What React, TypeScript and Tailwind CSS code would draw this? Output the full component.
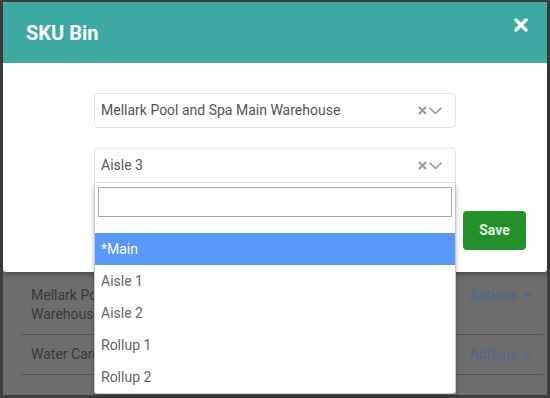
import { useState } from 'react'

const BINS = ['*Main', 'Aisle 1', 'Aisle 2', 'Rollup 1', 'Rollup 2']

const ROWS = [
  { name: 'Mellark Pool and Spa Main Warehouse', bin: 'Aisle 3' },
  { name: 'Water Care Warehouse', bin: 'Main' },
]

function ClearIcon() {
  return (
    <svg width="9" height="9" viewBox="0 0 9 9" className="text-[#9a9a9a]">
      <path d="M1.5 1.5l6 6M7.5 1.5l-6 6" stroke="currentColor" strokeWidth="2" strokeLinecap="round" />
    </svg>
  )
}

function ChevronIcon() {
  return (
    <svg width="13" height="8" viewBox="0 0 13 8" className="text-[#9a9a9a]">
      <path d="M1 1.2l5.5 5.3 5.5-5.3" stroke="currentColor" strokeWidth="1.6" fill="none" strokeLinecap="round" />
    </svg>
  )
}

function Picker({ value, open }: { value: string; open?: boolean }) {
  return (
    <div
      className={
        open
          ? 'flex h-[35px] items-center justify-between rounded-t-[4px] border border-b-[#e6e6e6] border-[#e3e3e3] bg-white pl-[6px] pr-[13px]'
          : 'flex h-[35px] items-center justify-between rounded-[4px] border border-[#e3e3e3] bg-white pl-[6px] pr-[13px]'
      }
    >
      <span className="text-[14px] text-[#555]">{value}</span>
      <span className="flex items-center gap-[2px]">
        <ClearIcon />
        <ChevronIcon />
      </span>
    </div>
  )
}

export default function App() {
  const [active] = useState(0)

  return (
    <div className="relative h-[398px] w-[550px] overflow-hidden bg-[#3f3f3f] px-[3px] pb-[3px] pt-[2px] font-['Roboto','Liberation_Sans',sans-serif]">
      {/* dimmed page behind the modal */}
      <div className="h-full bg-[#6d6d6d] pl-[19px] pr-[4px] pt-[274px]">
        {ROWS.map((r) => (
          <div
            key={r.name}
            className="flex items-start justify-between border-b border-[#555] py-[10px] pl-[9px] pr-[11px] text-[14px] leading-[19px]"
          >
            <div className="w-[63px] overflow-hidden">
              <span className="block w-[190px] text-[#3a3a3a]">{r.name}</span>
            </div>
            <span className="flex items-center gap-[7px] text-[#4a6a90]">
              Actions
              <span className="h-0 w-0 border-x-[4px] border-t-[4px] border-x-transparent border-t-[#4a6a90]" />
            </span>
          </div>
        ))}
      </div>

      {/* modal */}
      <div className="absolute left-[3px] top-[2px] w-[544px] rounded-[3px] bg-white shadow-[0_2px_6px_rgba(0,0,0,0.35)]">
        <div className="flex h-[61px] items-center justify-between rounded-t-[3px] bg-[#3ea9a0] pl-[23px] pr-[19px]">
          <h2 className="text-[20px] font-bold text-white">SKU Bin</h2>
          <svg width="14" height="14" viewBox="0 0 14 14" className="mb-[16px] text-white">
            <path d="M2 2l10 10M12 2L2 12" stroke="currentColor" strokeWidth="3.4" strokeLinecap="round" />
          </svg>
        </div>

        <div className="pt-[30px]">
          <div className="mx-[91px] flex flex-col gap-[20px]">
            <Picker value="Mellark Pool and Spa Main Warehouse" />
            <div className="relative">
              <Picker value="Aisle 3" open />
              <div className="absolute left-0 right-0 top-full z-10 rounded-b-[3px] border-x border-b border-[#c8c8c8] bg-white shadow-[0_3px_5px_rgba(0,0,0,0.25)]">
                <div className="px-[3px] pt-[4px]">
                  <div className="h-[30px] border border-[#a9a9a9] bg-white" />
                </div>
                <ul className="mt-[16px] text-[14px]">
                  {BINS.map((b, i) => (
                    <li
                      key={b}
                      className={
                        i === active
                          ? 'flex h-[32px] items-center bg-[#5897fb] pl-[6px] text-white'
                          : 'flex h-[32px] items-center pl-[6px] text-[#666]'
                      }
                    >
                      {b}
                    </li>
                  ))}
                </ul>
              </div>
            </div>
          </div>

          <div className="flex justify-end pb-[22px] pr-[21px] pt-[28px]">
            <button className="h-[39px] w-[63px] rounded-[4px] bg-[#22912a] text-[14px] font-bold text-[#e6f3e6]">
              Save
            </button>
          </div>
        </div>
      </div>
    </div>
  )
}
